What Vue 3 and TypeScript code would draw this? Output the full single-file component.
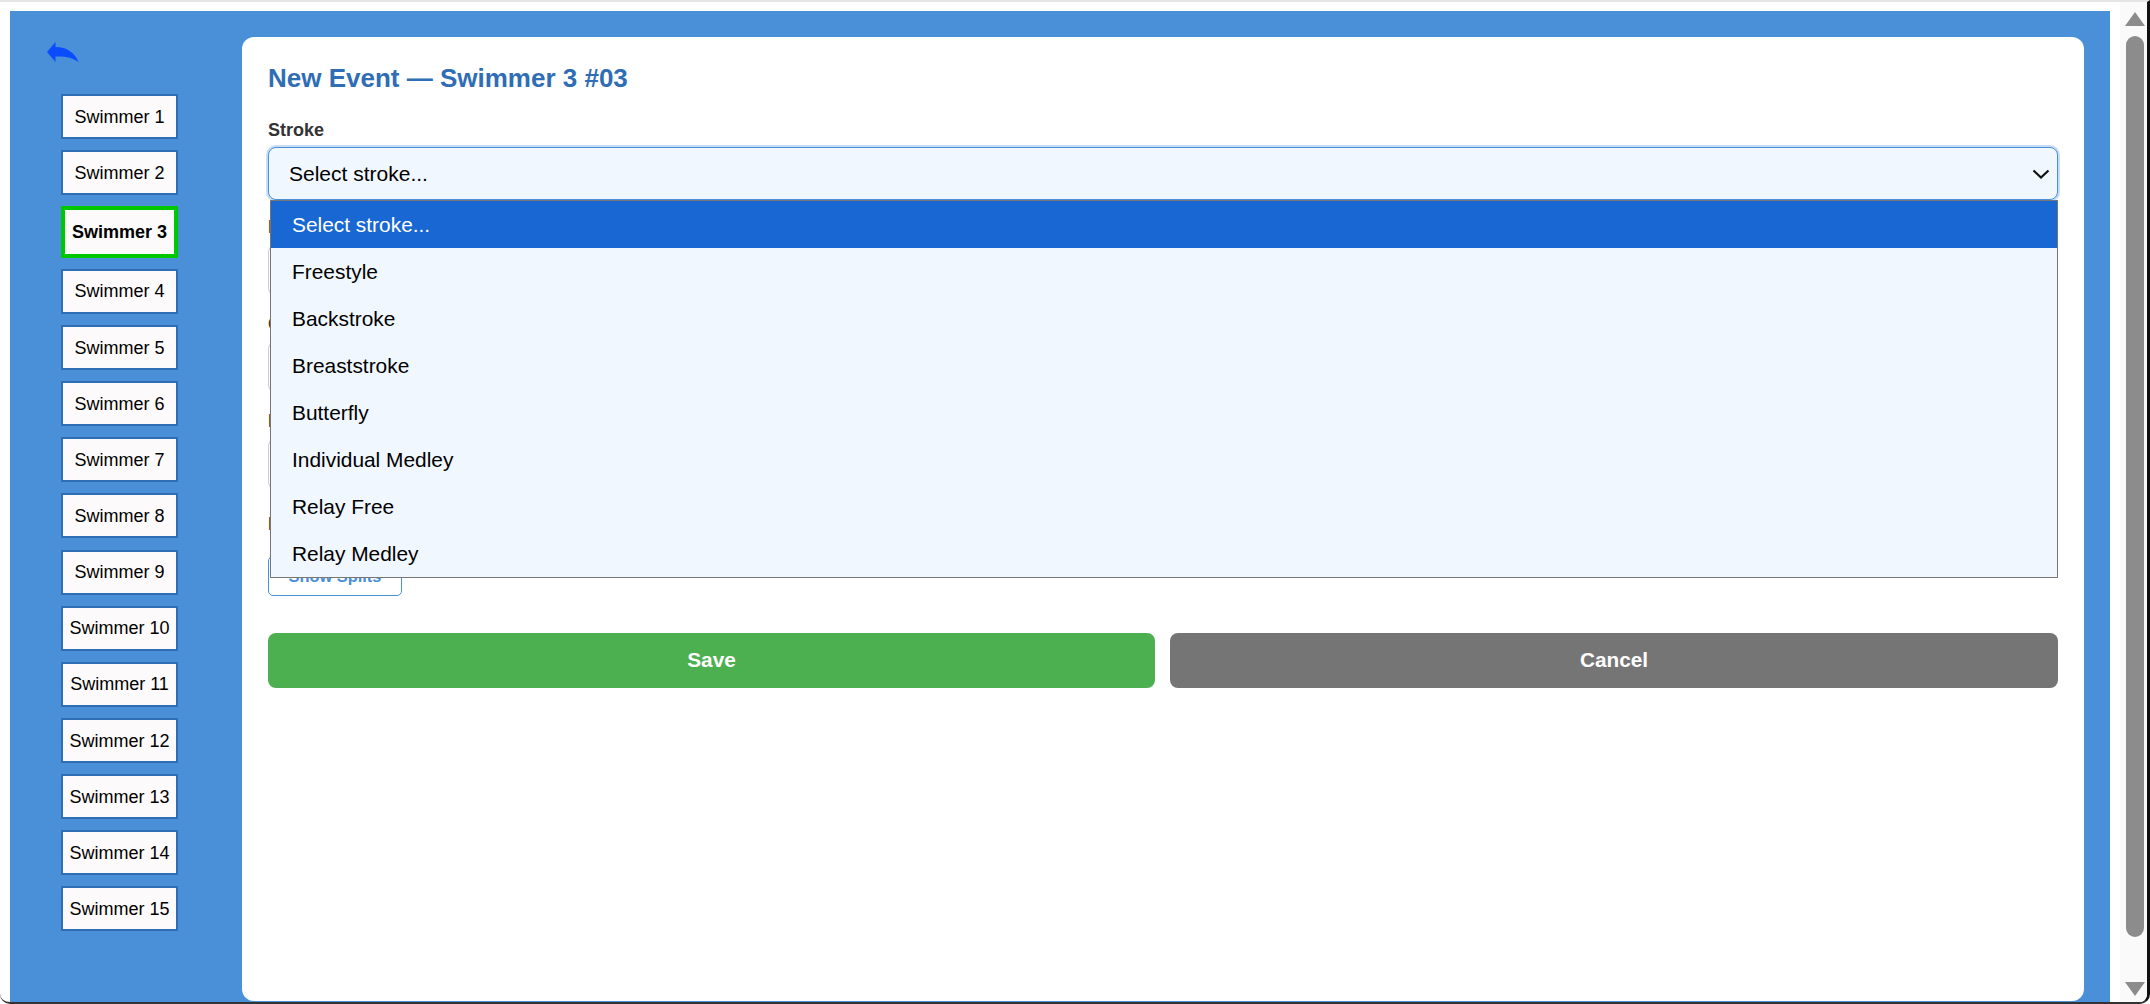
<script setup lang="ts">
import { ref } from 'vue'

const swimmers = Array.from({ length: 15 }, (_, i) => `Swimmer ${i + 1}`)
const activeSwimmer = ref('Swimmer 3')

const strokes = [
  'Select stroke...',
  'Freestyle',
  'Backstroke',
  'Breaststroke',
  'Butterfly',
  'Individual Medley',
  'Relay Free',
  'Relay Medley',
]
const selected = ref(strokes[0])
const dropdownOpen = ref(true)

function pickStroke(stroke: string) {
  selected.value = stroke
  dropdownOpen.value = false
}
</script>

<template>
  <div class="window">
    <div class="frame">
      <aside class="sidebar">
        <button class="back-btn" title="Back">
          <svg width="32" height="20" viewBox="0 0 32 20">
            <path d="M0 10 L8.5 0 V5 C20 5 28 11 31.5 20 C25 15.5 18 14 8.5 14.5 V20 Z" fill="#0a4cff" />
          </svg>
        </button>
        <div class="swimmer-list">
          <button
            v-for="name in swimmers"
            :key="name"
            class="swimmer-btn"
            :class="{ active: name === activeSwimmer }"
            @click="activeSwimmer = name"
          >
            {{ name }}
          </button>
        </div>
      </aside>

      <main class="card">
        <h2 class="title">New Event — {{ activeSwimmer }} #03</h2>

        <div class="field first">
          <label class="label">Stroke</label>
          <div class="select-wrap">
            <select class="stroke-select" @mousedown.prevent="dropdownOpen = !dropdownOpen">
              <option>{{ selected }}</option>
            </select>
            <svg class="chevron" width="18" height="10" viewBox="0 0 18 10">
              <path d="M1.5 1.5 L9 8.5 L16.5 1.5" fill="none" stroke="#111" stroke-width="2.2" />
            </svg>
            <ul v-if="dropdownOpen" class="dropdown">
              <li
                v-for="stroke in strokes"
                :key="stroke"
                class="dropdown-item"
                :class="{ current: stroke === selected }"
                @click="pickStroke(stroke)"
              >
                {{ stroke }}
              </li>
            </ul>
          </div>
        </div>

        <div class="field">
          <label class="label">Distance</label>
          <input class="text-input" type="text" />
        </div>
        <div class="field">
          <label class="label">Course</label>
          <input class="text-input" type="text" />
        </div>
        <div class="field">
          <label class="label">Date</label>
          <input class="text-input" type="text" />
        </div>
        <div class="field last">
          <label class="label">Final Time</label>
          <button class="splits-btn">Show Splits</button>
        </div>

        <div class="actions">
          <button class="action save">Save</button>
          <button class="action cancel">Cancel</button>
        </div>
      </main>
    </div>

    <div class="scrollbar">
      <div class="arrow up"></div>
      <div class="thumb"></div>
      <div class="arrow down"></div>
    </div>
  </div>
</template>

<style>
html,
body {
  margin: 0;
  background: #fff;
  overflow: hidden;
}
</style>

<style scoped>
.window {
  box-sizing: border-box;
  display: flex;
  height: 1004px;
  width: 2150px;
  padding: 9px 0 0 10px;
  border-top: 2px solid #e5e5e5;
  border-right: 3px solid #111;
  border-bottom: 2px solid #333;
  border-radius: 0 0 10px 10px;
  font-family: "Liberation Sans", Arial, sans-serif;
  overflow: hidden;
}

.frame {
  box-sizing: border-box;
  display: flex;
  width: 2100px;
  padding: 26px 26px 1px 0;
  background: #4a90d9;
}

.sidebar {
  box-sizing: border-box;
  width: 232px;
  flex-shrink: 0;
  padding: 5px 0 0 37px;
}

.back-btn {
  display: block;
  padding: 0;
  border: none;
  background: none;
  height: 20px;
  cursor: pointer;
}

.back-btn svg {
  display: block;
}

.swimmer-list {
  display: flex;
  flex-direction: column;
  gap: 11.15px;
  margin: 32px 0 0 14px;
  width: 117px;
}

.swimmer-btn {
  box-sizing: border-box;
  height: 45px;
  padding: 1px 0 0;
  border: 2px solid #2f6db5;
  background: #fcfafa;
  color: #000;
  font-family: inherit;
  font-size: 18px;
  cursor: pointer;
}

.swimmer-btn.active {
  height: 51.5px;
  padding: 0;
  border: 4.5px solid #00c800;
  font-weight: 700;
}

.card {
  flex: 1;
  box-sizing: border-box;
  padding: 27px 26px 26px;
  background: #fff;
  border-radius: 12px;
}

.title {
  margin: 0 0 27.5px;
  font-size: 26px;
  line-height: 28px;
  font-weight: 700;
  color: #2f6db5;
}

.field {
  margin-bottom: 17.5px;
}

.field.first {
  margin-bottom: 16.5px;
}

.field.last {
  margin-top: 24px;
  margin-bottom: 37px;
}

.field.last .label {
  margin-bottom: 22px;
}

.label {
  display: block;
  margin-bottom: 7.5px;
  font-size: 18px;
  line-height: 20px;
  font-weight: 700;
  color: #333;
}

.select-wrap {
  position: relative;
}

.stroke-select {
  box-sizing: border-box;
  display: block;
  width: 100%;
  height: 53px;
  padding: 0 20px;
  border: 1px solid #4a90d9;
  border-radius: 8px;
  background-color: #f0f7ff;
  box-shadow: 0 0 0 2px rgba(74, 144, 217, 0.3);
  color: #000;
  font-family: inherit;
  font-size: 21px;
  outline: none;
  appearance: none;
}

.chevron {
  position: absolute;
  top: 22px;
  right: 8px;
  pointer-events: none;
}

.dropdown {
  position: absolute;
  top: 53px;
  left: 2px;
  right: 0;
  z-index: 10;
  margin: 0;
  padding: 0;
  list-style: none;
  border: 1px solid #767676;
  background: #f0f7ff;
}

.dropdown-item {
  height: 47px;
  padding-left: 21px;
  line-height: 47px;
  font-size: 20.9px;
  color: #000;
  cursor: default;
}

.dropdown-item.current {
  background: #1967d2;
  color: #fff;
}

.text-input {
  box-sizing: border-box;
  display: block;
  width: 100%;
  height: 52px;
  border: 1px solid #ccc;
  border-radius: 8px;
  background: #fff;
}

.splits-btn {
  box-sizing: border-box;
  display: block;
  width: 134px;
  height: 40px;
  padding: 0;
  border: 1px solid #4a90d9;
  border-radius: 5px;
  background: #fff;
  color: #4a90d9;
  font-family: inherit;
  font-size: 16.4px;
  font-weight: 700;
  cursor: pointer;
}

.actions {
  display: flex;
  gap: 15px;
}

.action {
  height: 55px;
  padding: 0 0 1px;
  border: none;
  border-radius: 8px;
  color: #fff;
  font-family: inherit;
  font-size: 20.8px;
  font-weight: 700;
  cursor: pointer;
}

.save {
  flex: 0 0 887px;
  background: #4caf50;
}

.cancel {
  flex: 1;
  background: #757575;
}

.scrollbar {
  box-sizing: border-box;
  flex: 1;
  display: flex;
  flex-direction: column;
  align-items: center;
  margin: -9px 0 0 10px;
  padding: 10px 0 6px 2px;
  background: #fafafa;
}

.thumb {
  flex: 1;
  width: 18px;
  margin: 10px 0 45px;
  border-radius: 9px;
  background: #8c8c8c;
}

.arrow {
  width: 0;
  height: 0;
  border-left: 10px solid transparent;
  border-right: 10px solid transparent;
}

.arrow.up {
  border-bottom: 14px solid #8c8c8c;
}

.arrow.down {
  border-top: 14px solid #8c8c8c;
}
</style>
